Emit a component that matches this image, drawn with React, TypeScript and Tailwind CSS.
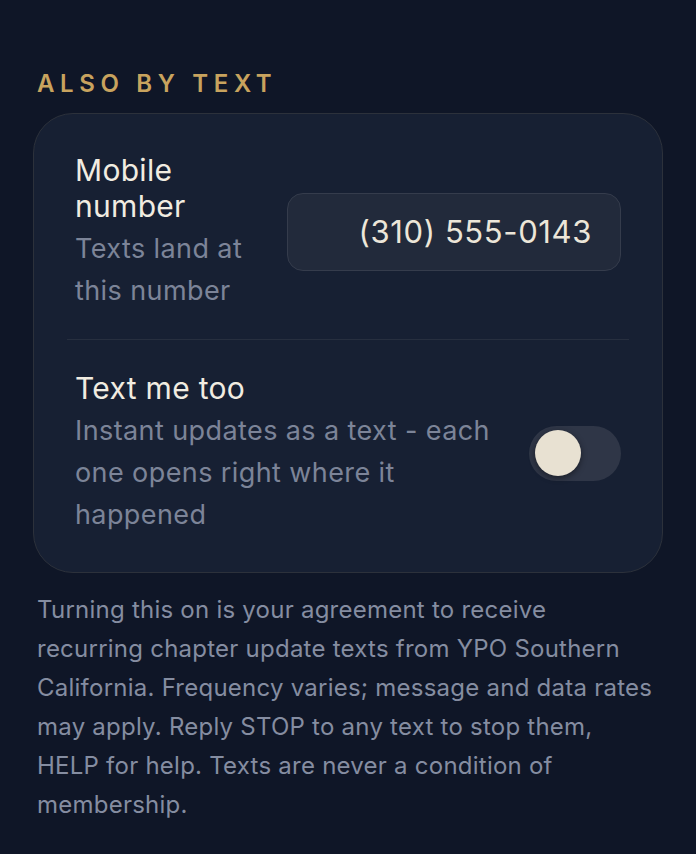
import React from "react";

export default function App() {
  return (
    <div
      className="min-h-[854px] w-full bg-[#0f1627] px-[33px] pt-[69px]"
      style={{ fontFamily: "Inter, 'Noto Sans', sans-serif" }}
    >
      <div className="px-1 text-[24px] font-semibold leading-[30px] tracking-[0.235em] text-[#c8a35e]">
        ALSO BY TEXT
      </div>
      <div className="mt-[14px] rounded-[40px] border border-[#2c313b] bg-[#172033] px-[33px] py-[8px]">
        <div className="flex items-center gap-[32px] border-b border-[#272f3f] px-2 pb-[27px] pt-[30px]">
          <div className="flex-1">
            <div className="text-[30px] leading-[36px] tracking-[0.01em] text-[#f1ece1]">Mobile number</div>
            <div className="mt-[4px] text-[27px] leading-[42px] tracking-[0.015em] text-[#7c8498]">
              Texts land at this number
            </div>
          </div>
          <div className="flex h-[78px] w-[334px] items-center justify-end rounded-[16px] border border-[#353c4c] bg-[#222a3b] pr-[28px] text-[31px] tracking-[0.02em] text-[#ece6d9]">
            (310) 555-0143
          </div>
        </div>
        <div className="flex items-center gap-[36px] px-2 pb-[28px] pt-[30px]">
          <div className="flex-1">
            <div className="text-[30px] leading-[36px] tracking-[0.01em] text-[#f1ece1]">Text me too</div>
            <div className="mt-[4px] text-[27px] leading-[42px] tracking-[0.015em] text-[#7c8498]">
              Instant updates as a text - each one opens right where it happened
            </div>
          </div>
          <div className="flex h-[55px] w-[92px] shrink-0 items-center rounded-full bg-[#2f3647] pl-[6px]">
            <div className="h-[46px] w-[46px] rounded-full bg-[#e8e1d2] shadow-[0_2px_6px_rgba(0,0,0,0.45)]" />
          </div>
        </div>
      </div>
      <p className="mt-[17px] px-1 text-[24px] leading-[39px] tracking-[0.01em] text-[#858da1]">
        Turning this on is your agreement to receive recurring chapter update texts from YPO Southern
        California. Frequency varies; message and data rates may apply. Reply STOP to any text to stop
        them, HELP for help. Texts are never a condition of membership.
      </p>
    </div>
  );
}
